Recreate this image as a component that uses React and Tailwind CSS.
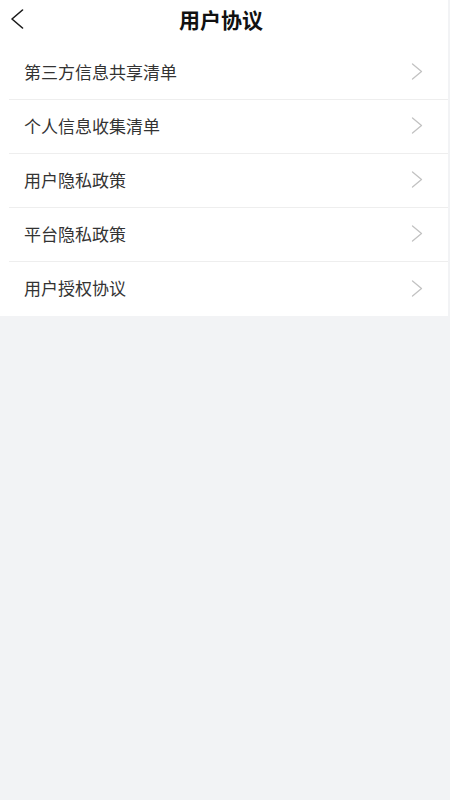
const items = ["第三方信息共享清单", "个人信息收集清单", "用户隐私政策", "平台隐私政策", "用户授权协议"];

const font = { fontFamily: '"Noto Sans CJK SC", "Noto Sans", sans-serif' };

export default function App() {
  return (
    <div className="flex min-h-[800px] w-[450px] bg-[#f2f3f5]" style={font}>
      <div className="w-[448px] self-start bg-white">
        {/* Header */}
        <div className="relative flex h-[46px] items-start justify-center pt-[5px] pr-[6px]">
          <svg className="absolute left-[10px] top-[9px]" width="14" height="20" viewBox="0 0 14 20" fill="none">
            <path d="M12.5 1 L2 10 L12.5 19" stroke="#1a1a1a" strokeWidth="1.6" strokeLinecap="round" strokeLinejoin="round" />
          </svg>
          <h1 className="text-[21px] leading-[29px] font-bold text-[#111]">用户协议</h1>
        </div>

        {/* List */}
        <ul className="pl-[9px]">
          {items.map((t, i) => (
            <li
              key={t}
              className={`flex h-[54px] items-center justify-between pb-[2px] pl-[15px] pr-[25px] ${i < items.length - 1 ? "border-b border-[#eeeeee]" : ""}`}
            >
              <span className="text-[17px] text-[#333]">{t}</span>
              <svg width="12" height="17" viewBox="0 0 12 17" fill="none">
                <path d="M1.5 1 L10.5 8.5 L1.5 16" stroke="#c2c2c2" strokeWidth="1.3" strokeLinecap="round" strokeLinejoin="round" />
              </svg>
            </li>
          ))}
        </ul>
      </div>
    </div>
  );
}
